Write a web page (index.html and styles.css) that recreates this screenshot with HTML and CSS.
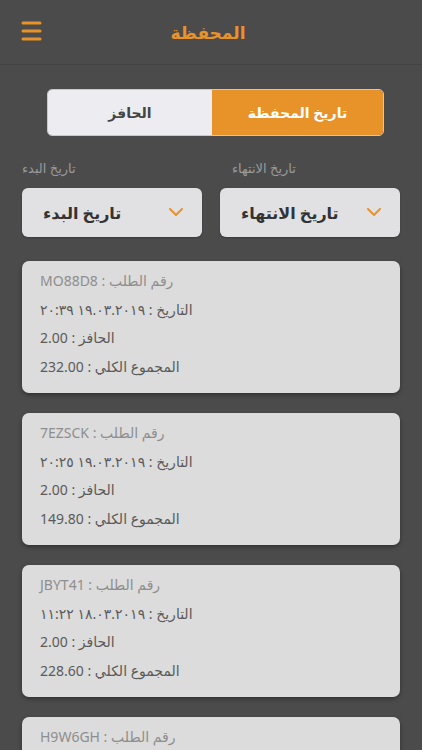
FILE: index.html
```html
<!DOCTYPE html>
<html lang="ar">
  <head>
    <meta charset="UTF-8" />
    <meta name="viewport" content="width=device-width, initial-scale=1.0" />
    <title>المحفظة</title>
    <link rel="stylesheet" href="styles.css">
  </head>
  <body>
    <header class="topbar">
      <button class="menu-btn" aria-label="menu">
        <svg width="21" height="20" viewBox="0 0 21 20">
          <g stroke="#e8922a" stroke-width="3" stroke-linecap="round">
            <line x1="2" y1="2" x2="19" y2="2" />
            <line x1="2" y1="10" x2="19" y2="10" />
            <line x1="2" y1="18" x2="19" y2="18" />
          </g>
        </svg>
      </button>
      <h1 class="title">المحفظة</h1>
    </header>

    <div class="segment">
      <button class="segment-item">الحافز</button>
      <button class="segment-item active">تاريخ المحفظة</button>
    </div>

    <div class="filters">
      <div class="filter">
        <span class="filter-label">تاريخ البدء</span>
        <div class="select">
          <span class="select-text">تاريخ البدء</span>
          <svg width="14" height="9" viewBox="0 0 14 9"><polyline points="1,1 7,7 13,1" fill="none" stroke="#e8922a" stroke-width="2" stroke-linecap="round" stroke-linejoin="round"/></svg>
        </div>
      </div>
      <div class="filter">
        <span class="filter-label shift">تاريخ الانتهاء</span>
        <div class="select">
          <span class="select-text">تاريخ الانتهاء</span>
          <svg width="14" height="9" viewBox="0 0 14 9"><polyline points="1,1 7,7 13,1" fill="none" stroke="#e8922a" stroke-width="2" stroke-linecap="round" stroke-linejoin="round"/></svg>
        </div>
      </div>
    </div>

    <div class="orders">
      <div class="card">
        <p class="line muted">رقم الطلب : MO88D8</p>
        <p class="line">التاريخ : ١٩.٠٣.٢٠١٩ ٢٠:٣٩</p>
        <p class="line">الحافز : 2.00</p>
        <p class="line">المجموع الكلي : 232.00</p>
      </div>
      <div class="card">
        <p class="line muted">رقم الطلب : 7EZSCK</p>
        <p class="line">التاريخ : ١٩.٠٣.٢٠١٩ ٢٠:٢٥</p>
        <p class="line">الحافز : 2.00</p>
        <p class="line">المجموع الكلي : 149.80</p>
      </div>
      <div class="card">
        <p class="line muted">رقم الطلب : JBYT41</p>
        <p class="line">التاريخ : ١٨.٠٣.٢٠١٩ ١١:٢٢</p>
        <p class="line">الحافز : 2.00</p>
        <p class="line">المجموع الكلي : 228.60</p>
      </div>
      <div class="card">
        <p class="line muted">رقم الطلب : H9W6GH</p>
        <p class="line">التاريخ : ١٨.٠٣.٢٠١٩ ١٠:٤٠</p>
        <p class="line">الحافز : 2.00</p>
        <p class="line">المجموع الكلي : 120.00</p>
      </div>
    </div>
  </body>
</html>
```

FILE: styles.css
```css
body {
  margin: 0;
  height: 750px;
  overflow: hidden;
  background: #4b4b4b;
  font-family: "Noto Sans", "DejaVu Sans", sans-serif;
  color: #555;
}
.topbar {
  height: 65px;
  border-bottom: 1px solid #444;
  display: flex;
  align-items: center;
  position: relative;
  box-sizing: border-box;
}
.menu-btn {
  background: none;
  border: none;
  padding: 0;
  margin-left: 21px;
  margin-top: -2px;
  display: flex;
}
.title {
  position: absolute;
  left: 0;
  right: 6px;
  top: 20px;
  margin: 0;
  text-align: center;
  color: #e8922a;
  font-size: 17px;
  font-weight: 700;
  line-height: 26px;
}
.segment {
  margin: 24px 0 0 47px;
  width: 337px;
  height: 47px;
  display: flex;
  border: 1px solid #c9c9cc;
  border-radius: 5px;
  overflow: hidden;
  box-sizing: border-box;
}
.segment-item {
  border: none;
  font-family: inherit;
  font-size: 14px;
  font-weight: 700;
  background: #ededf1;
  color: #444;
  width: 164px;
}
.segment-item.active {
  flex: 1;
  background: #e8922a;
  color: #fff;
}
.filters {
  display: flex;
  gap: 18px;
  padding: 0 22px;
  margin-top: 23px;
}
.filter {
  flex: 1;
  display: flex;
  flex-direction: column;
  gap: 11px;
}
.filter-label {
  color: #9a9a9a;
  font-size: 13px;
  line-height: 18px;
  direction: rtl;
  align-self: flex-start;
}
.filter-label.shift {
  margin-left: 12px;
}
.select {
  height: 49px;
  background: #e1e1e3;
  border-radius: 6px;
  display: flex;
  align-items: center;
  justify-content: space-between;
  padding: 0 19px 0 21px;
  box-shadow: 0 1px 2px rgba(0, 0, 0, 0.25);
}
.select-text {
  font-size: 16px;
  font-weight: 700;
  color: #333;
  direction: rtl;
}
.orders {
  padding: 0 22px;
  margin-top: 24px;
  display: flex;
  flex-direction: column;
  gap: 20px;
}
.card {
  background: #dcdcdc;
  border-radius: 7px;
  padding: 6px 18px 12px;
  box-shadow: 0 2px 4px rgba(0, 0, 0, 0.35);
}
.line {
  margin: 0;
  direction: rtl;
  text-align: left;
  font-size: 14px;
  line-height: 28.5px;
  color: #5a5a5a;
}
.line.muted {
  color: #8e8e8e;
}
```
